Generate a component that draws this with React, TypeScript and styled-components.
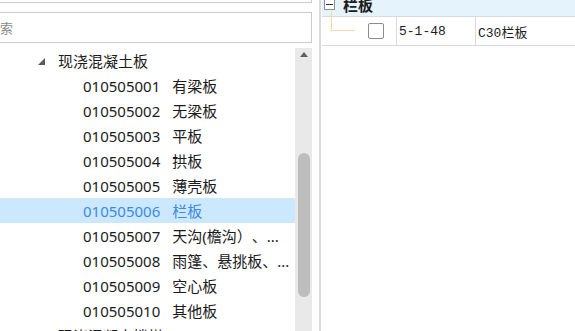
import React from "react";
import styled, { createGlobalStyle } from "styled-components";

const Global = createGlobalStyle`
  html, body { margin: 0; padding: 0; overflow: hidden; background: #ffffff; }
  #root { width: 575px; height: 331px; }
`;

const Root = styled.div`
  display: flex;
  width: 575px;
  height: 331px;
  overflow: hidden;
  background: #ffffff;
  font-family: "Noto Sans", "Noto Sans CJK SC", sans-serif;
  text-spacing-trim: space-all;
`;

const LeftPane = styled.div`
  width: 312px;
  flex-shrink: 0;
  display: flex;
  flex-direction: column;
`;

const TopField = styled.div`
  height: 2px;
  margin-left: -20px;
  border-bottom: 1px solid #cbcbcb;
  border-right: 1px solid #cbcbcb;
`;

const SearchField = styled.div`
  margin-top: 9px;
  margin-left: -20px;
  height: 29px;
  border: 1px solid #cbcbcb;
  display: flex;
  align-items: center;
  padding-left: 6px;
  font-family: "Noto Sans CJK SC", sans-serif;
  font-size: 13px;
  color: #8a8a8a;
`;

const TreeArea = styled.div`
  margin-top: 5px;
  flex: 1;
  display: flex;
  overflow: hidden;
`;

const TreeList = styled.div`
  flex: 1;
  display: flex;
  flex-direction: column;
`;

const Row = styled.div<{ $level: number; $selected?: boolean }>`
  height: 25px;
  flex-shrink: 0;
  display: flex;
  align-items: center;
  padding-left: ${(p) => (p.$level === 1 ? 38 : 83)}px;
  background: ${(p) => (p.$selected ? "#cce8ff" : "transparent")};
  color: ${(p) => (p.$selected ? "#3b8ae6" : "#1b1b1b")};
  font-size: 15px;
  white-space: nowrap;
`;

const Caret = styled.svg<{ $hidden?: boolean }>`
  width: 7px;
  height: 7px;
  margin-right: 13px;
  margin-top: 2px;
  visibility: ${(p) => (p.$hidden ? "hidden" : "visible")};
`;

const Code = styled.span`
  letter-spacing: 0;
`;

const Name = styled.span`
  margin-left: 12px;
`;

const Scrollbar = styled.div`
  width: 17px;
  flex-shrink: 0;
  background: #e9e9e9;
  display: flex;
  flex-direction: column;
  align-items: center;
`;

const ArrowUp = styled.svg`
  margin-top: 4px;
  width: 8px;
  height: 5px;
`;

const Thumb = styled.div`
  margin-top: 96px;
  width: 12px;
  height: 144px;
  border-radius: 6px;
  background: #bdbdbd;
`;

const RightPane = styled.div`
  flex: 1;
  margin-left: 7px;
  border-left: 2px solid #dadada;
  display: flex;
  flex-direction: column;
`;

const Grid = styled.div`
  margin-left: 1px;
  display: flex;
  flex-direction: column;
  font-family: "Liberation Mono", "Noto Sans CJK SC", monospace;
  font-size: 13px;
  color: #1b1b1b;
`;

const HeaderRow = styled.div`
  margin-top: -8px;
  height: 25px;
  padding-top: 1px;
  box-sizing: border-box;
  border-bottom: 1px solid #dadada;
  background: #e5f3fd;
  display: flex;
  align-items: center;
  font-family: "Noto Sans CJK SC", sans-serif;
  font-weight: 700;
  font-size: 15px;
`;

const ExpandBox = styled.div`
  margin-left: 2px;
  width: 9px;
  height: 9px;
  border: 1px solid #8f8f8f;
  background: #ffffff;
  display: flex;
  align-items: center;
  justify-content: center;
`;

const MinusBar = styled.div`
  width: 7px;
  height: 1px;
  background: #333333;
`;

const HeaderTitle = styled.span`
  margin-left: 8px;
`;

const DataRow = styled.div`
  height: 28px;
  border-bottom: 1px solid #dadada;
  display: flex;
  align-items: stretch;
`;

const TreeCell = styled.div`
  position: relative;
  width: 74px;
  border-right: 1px solid #dadada;
  display: flex;
  align-items: center;
`;

const Connector = styled.div`
  position: absolute;
  left: 9px;
  top: -6px;
  width: 23px;
  height: 19px;
  border-left: 1px solid #fcd7a6;
  border-bottom: 1px solid #fcd7a6;
`;

const CheckBox = styled.div`
  margin-left: 46px;
  width: 14px;
  height: 14px;
  border: 1px solid #8c8c8c;
  border-radius: 2px;
  background: #ffffff;
`;

const Cell = styled.div<{ $width?: number }>`
  ${(p) => (p.$width ? `width: ${p.$width}px;` : "flex: 1;")}
  border-right: ${(p) => (p.$width ? "1px solid #dadada" : "none")};
  display: flex;
  align-items: center;
  padding-left: 2px;
  white-space: nowrap;
`;

const items = [
  { code: "010505001", name: "有梁板" },
  { code: "010505002", name: "无梁板" },
  { code: "010505003", name: "平板" },
  { code: "010505004", name: "拱板" },
  { code: "010505005", name: "薄壳板" },
  { code: "010505006", name: "栏板", selected: true },
  { code: "010505007", name: "天沟(檐沟）、..." },
  { code: "010505008", name: "雨篷、悬挑板、..." },
  { code: "010505009", name: "空心板" },
  { code: "010505010", name: "其他板" },
];

export default function App() {
  return (
    <>
      <Global />
      <Root>
        <LeftPane>
          <TopField />
          <SearchField>搜索</SearchField>
          <TreeArea>
            <TreeList>
              <Row $level={1}>
                <Caret viewBox="0 0 7 7">
                  <polygon points="7,0 7,7 0,7" fill="#595959" />
                </Caret>
                现浇混凝土板
              </Row>
              {items.map((it) => (
                <Row key={it.code} $level={2} $selected={it.selected}>
                  <Code>{it.code}</Code>
                  <Name>{it.name}</Name>
                </Row>
              ))}
              <Row $level={1}>
                <Caret viewBox="0 0 7 7" $hidden />
                现浇混凝土楼梯
              </Row>
            </TreeList>
            <Scrollbar>
              <ArrowUp viewBox="0 0 8 5">
                <polygon points="4,0 8,5 0,5" fill="#606060" />
              </ArrowUp>
              <Thumb />
            </Scrollbar>
          </TreeArea>
        </LeftPane>
        <RightPane>
          <Grid>
            <HeaderRow>
              <ExpandBox>
                <MinusBar />
              </ExpandBox>
              <HeaderTitle>栏板</HeaderTitle>
            </HeaderRow>
            <DataRow>
              <TreeCell>
                <Connector />
                <CheckBox />
              </TreeCell>
              <Cell $width={76}>5-1-48</Cell>
              <Cell>C30栏板</Cell>
            </DataRow>
          </Grid>
        </RightPane>
      </Root>
    </>
  );
}
